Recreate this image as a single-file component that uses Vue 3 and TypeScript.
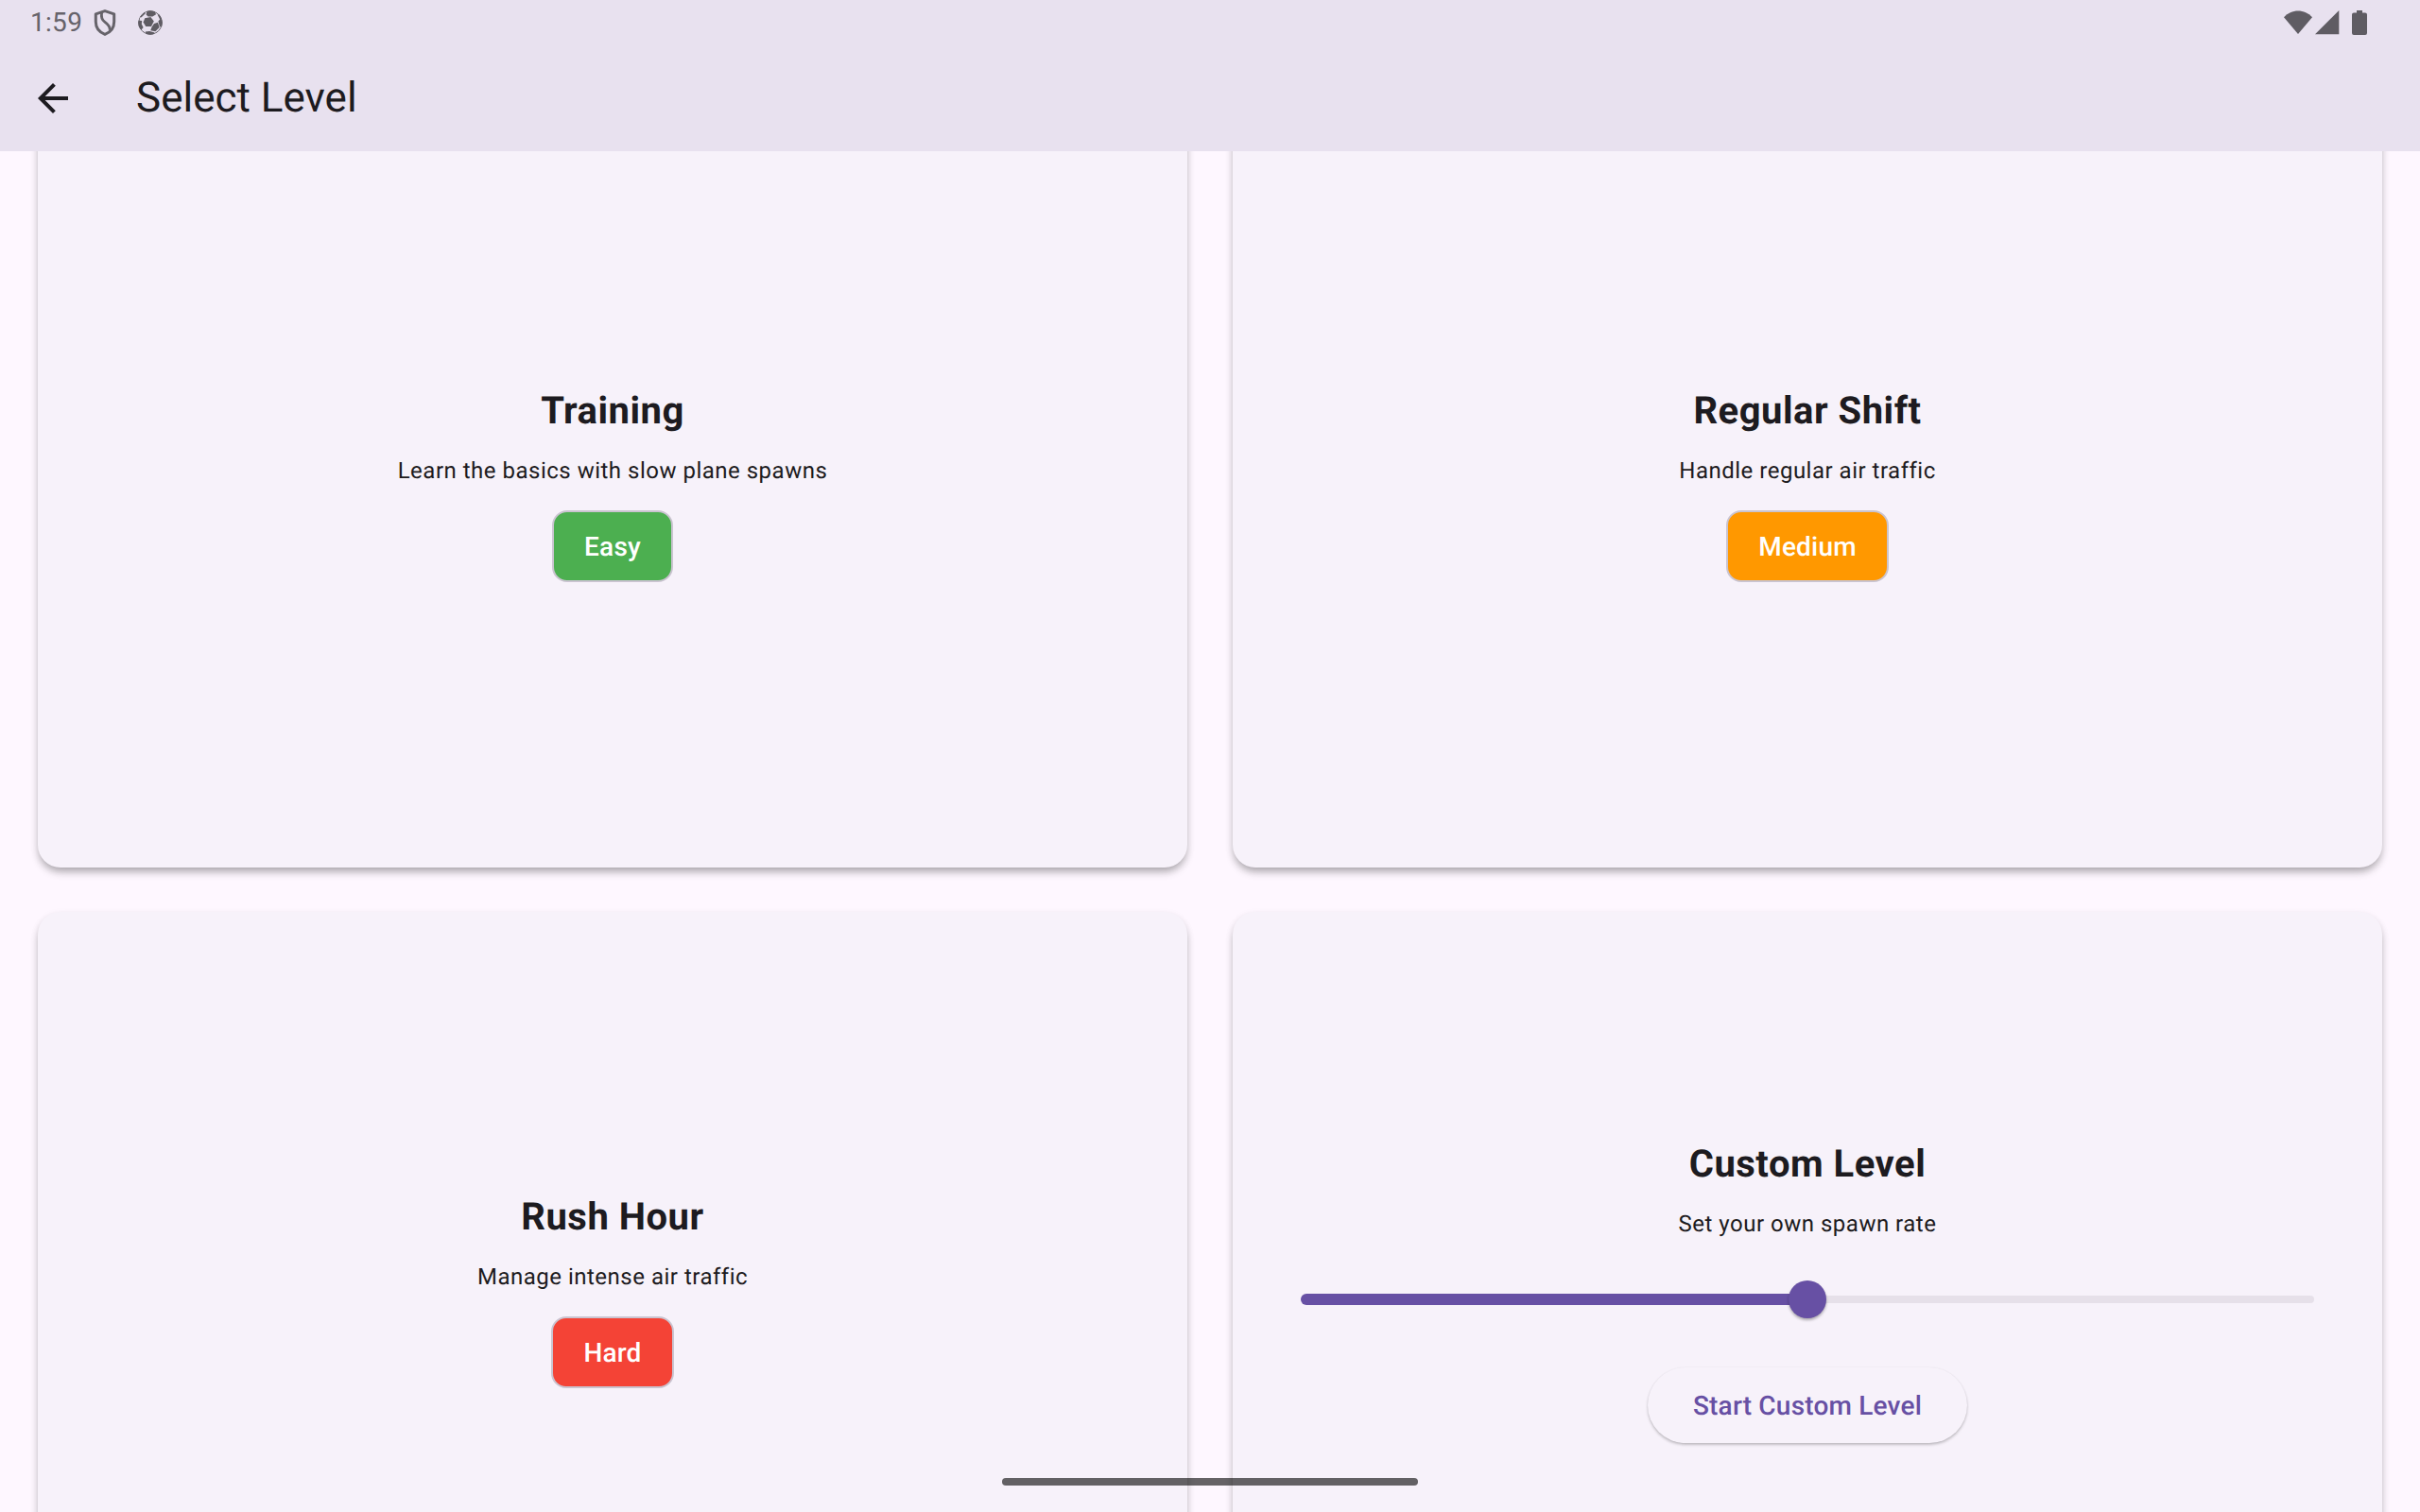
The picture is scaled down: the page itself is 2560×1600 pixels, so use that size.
<script setup lang="ts">
interface Level {
  title: string
  text: string
  badge: string
  color: string
}

const levels: Level[] = [
  { title: 'Training', text: 'Learn the basics with slow plane spawns', badge: 'Easy', color: '#4caf50' },
  { title: 'Regular Shift', text: 'Handle regular air traffic', badge: 'Medium', color: '#ff9800' },
  { title: 'Rush Hour', text: 'Manage intense air traffic', badge: 'Hard', color: '#f44336' },
]

const spawnRate = 50
</script>

<template>
  <div class="screen">
    <header class="app-bar">
      <div class="status">
        <span class="clock">1:59</span>
        <svg class="shield" viewBox="0 0 24 28" width="24" height="28">
          <path d="M12 1.6 L21.7 4.8 V13 C21.7 19.4 17.6 24.2 12 26.4 C6.4 24.2 2.3 19.4 2.3 13 V4.8 Z" fill="none" stroke="#66636a" stroke-width="3" stroke-linejoin="round" />
          <path d="M8.6 3.5 C7.8 8 8.6 11 12 13.4 C15.8 16 17.4 18 17.2 21.8" fill="none" stroke="#66636a" stroke-width="2.8" />
        </svg>
        <svg class="ball" viewBox="0 0 26 26" width="26" height="26">
          <defs><clipPath id="ball-clip"><circle cx="13" cy="13" r="12.8" /></clipPath></defs>
          <g clip-path="url(#ball-clip)">
            <circle cx="13" cy="13" r="12.4" fill="none" stroke="#5f5c63" stroke-width="1" />
            <g fill="#5f5c63">
              <path d="M7.2 8.2 L13.4 7 L16.8 11.4 L14 17 L8.2 17 L5.6 12.6 Z" />
              <path d="M8.6 4.6 L9.6 0 L17.6 0 L19 4.2 L15.4 6.6 L10.6 6.6 Z" />
              <path d="M20.6 4.6 L23 4 L27 12 L25.4 17.4 L23 17.2 L21.4 11.4 L23.2 9.4 Z" />
              <path d="M17 14 L21 12.8 L22.6 18 L18.4 22.2 L13.2 21.2 L14.6 17.6 Z" />
              <path d="M-1 10.4 L4.2 11 L3.8 14.4 L5.6 18 L3.6 20.4 L-1 16 Z" />
              <path d="M7.8 22.6 L12.2 22 L17.6 23.4 L16 27 L9 27 Z" />
              <path d="M2.4 6.4 L7.4 1.4 L7.8 3.2 L3.4 7.4 Z" />
            </g>
          </g>
        </svg>
        <div class="signals">
          <svg width="30" height="26" viewBox="0 0 30 26"><path d="M15 25 L0 7.2 C8 -1.8 22 -1.8 30 7.2 Z" fill="#5f5c63" /></svg>
          <svg class="cell" width="26" height="26" viewBox="0 0 26 26"><path d="M0 25.3 L25.3 0 V25.3 Z" fill="#5f5c63" /></svg>
          <svg class="battery" width="16" height="26" viewBox="0 0 16 26"><path d="M5 0 H11 V2.4 H14 Q16 2.4 16 4.4 V24 Q16 26 14 26 H2 Q0 26 0 24 V4.4 Q0 2.4 2 2.4 H5 Z" fill="#5f5c63" /></svg>
        </div>
      </div>
      <div class="toolbar">
        <svg class="back" width="48" height="48" viewBox="0 0 24 24"><path d="M20 11H7.83l5.59-5.59L12 4l-8 8 8 8 1.41-1.41L7.83 13H20v-2z" fill="#1d1b20" /></svg>
        <h1>Select Level</h1>
      </div>
    </header>

    <main class="viewport">
      <div class="grid">
        <section v-for="level in levels" :key="level.title" class="card">
          <h2>{{ level.title }}</h2>
          <p>{{ level.text }}</p>
          <span class="chip" :style="{ backgroundColor: level.color }">{{ level.badge }}</span>
        </section>
        <section class="card">
          <h2>Custom Level</h2>
          <p>Set your own spawn rate</p>
          <div class="slider">
            <div class="active" :style="{ width: spawnRate + '%' }"><i class="thumb"></i></div>
            <div class="inactive"></div>
          </div>
          <button class="start" type="button">Start Custom Level</button>
        </section>
      </div>
    </main>
    <div class="home-handle"></div>
  </div>
</template>

<style>
body {
  margin: 0;
  overflow: hidden;
}
</style>

<style scoped>
.screen {
  position: relative;
  display: flex;
  flex-direction: column;
  width: 2560px;
  height: 1600px;
  overflow: hidden;
  background: #fef7ff;
  color: #1d1b20;
  font-family: Roboto, sans-serif;
  text-rendering: geometricPrecision;
}

.app-bar {
  flex: none;
  height: 160px;
  background: #e8e1ef;
}

.status {
  display: flex;
  align-items: center;
  height: 48px;
  padding: 0 56px 0 32px;
}

.clock {
  width: 67px;
  font-size: 28px;
  line-height: 48px;
  letter-spacing: 0.3px;
  color: #66636a;
}

.ball {
  margin-left: 23px;
}

.signals {
  display: flex;
  margin-left: auto;
}

.cell {
  margin-left: 3px;
}

.battery {
  margin-left: 13px;
}

.toolbar {
  display: flex;
  align-items: center;
  height: 112px;
  padding-left: 32px;
}

h1 {
  margin: 0 0 2px 64px;
  font-size: 44px;
  font-weight: 400;
  line-height: 56px;
}

.viewport {
  flex: 1;
  min-height: 0;
  overflow: hidden;
}

.grid {
  display: grid;
  grid-template-columns: 1216px 1216px;
  grid-auto-rows: 806px;
  gap: 47px 48px;
  margin: -48px 40px 0;
}

.card {
  display: flex;
  flex-direction: column;
  align-items: center;
  justify-content: center;
  border-radius: 24px;
  background: #f7f2fa;
  box-shadow: 0 6px 10px -2px rgba(0, 0, 0, 0.3), 0 3px 8px rgba(0, 0, 0, 0.08);
}

h2 {
  margin: 2px 0 0;
  font-size: 40px;
  font-weight: 700;
  line-height: 57px;
  letter-spacing: 0.5px;
}

p {
  margin: 17px 0 13px;
  font-size: 24px;
  line-height: 37px;
  letter-spacing: 0.5px;
}

.chip {
  box-sizing: border-box;
  height: 76px;
  margin: 10px 0;
  padding: 0 32px;
  border: 2px solid #cac4d0;
  border-radius: 16px;
  color: #fff;
  font-size: 28px;
  font-weight: 500;
  line-height: 74px;
  letter-spacing: 0.2px;
}

.slider {
  display: flex;
  align-items: center;
  width: 1072px;
  height: 96px;
  margin-bottom: 16px;
}

.active {
  position: relative;
  z-index: 1;
  display: flex;
  align-items: center;
  justify-content: flex-end;
  height: 12px;
  border-radius: 6px 0 0 6px;
  background: #6750a4;
}

.thumb {
  flex: none;
  width: 40px;
  height: 40px;
  margin-right: -20px;
  border-radius: 50%;
  background: #6750a4;
  box-shadow: 0 2px 3px rgba(0, 0, 0, 0.3);
}

.inactive {
  flex: 1;
  height: 8px;
  border-radius: 0 4px 4px 0;
  background: #e6e0e9;
}

.start {
  height: 80px;
  margin: 8px 0;
  padding: 2px 48px 0;
  border: 0;
  border-radius: 40px;
  background: #f7f2fa;
  box-shadow: 0 2px 3px rgba(0, 0, 0, 0.22), 0 0 2px rgba(0, 0, 0, 0.06);
  color: #6750a4;
  font: 500 28px/40px Roboto, sans-serif;
  letter-spacing: 0.2px;
  text-rendering: inherit;
}

.home-handle {
  position: absolute;
  left: 1060px;
  bottom: 28px;
  width: 440px;
  height: 8px;
  border-radius: 4px;
  background: rgba(0, 0, 0, 0.6);
}
</style>
